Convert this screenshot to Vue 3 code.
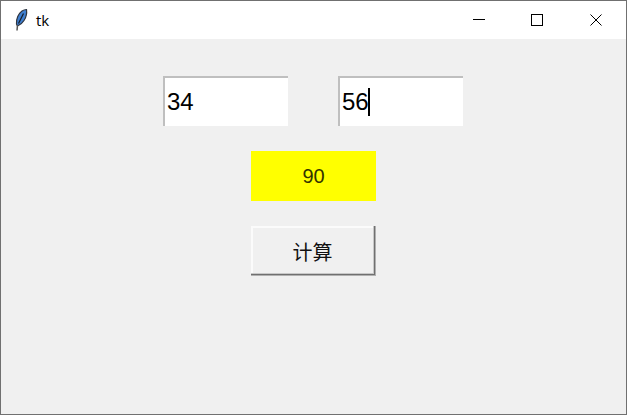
<template>
  <div class="window">
    <div class="titlebar">
      <svg class="feather" width="16" height="24" viewBox="0 0 16 24">
        <path d="M3.500 16 C3 11 5.500 5.500 9 3 C10.500 2 12 1.500 13.500 1.500 C14 5 13 9.500 11 12.500 C9.500 15 7 17 4.500 18 Z" fill="#3f7fd0" stroke="#2f3540" stroke-width="1.200" />
        <path d="M5.500 15.500 L10.500 5.500" stroke="#141c28" stroke-width="1.200" fill="none" />
        <path d="M4.500 17 L4 22.500" stroke="#555" stroke-width="1.500" fill="none" />
      </svg>
      <span class="title">tk</span>
      <div class="controls">
        <div class="ctrl">
          <svg width="12" height="12" viewBox="0 0 12 12"><path d="M0 5.500H12" stroke="#000" /></svg>
        </div>
        <div class="ctrl">
          <svg width="12" height="12" viewBox="0 0 12 12"><rect x="0.500" y="0.500" width="11" height="11" fill="none" stroke="#000" /></svg>
        </div>
        <div class="ctrl">
          <svg width="12" height="12" viewBox="0 0 12 12"><path d="M0.500 0.500L11.500 11.500M11.500 0.500L0.500 11.500" stroke="#000" /></svg>
        </div>
      </div>
    </div>
    <div class="content">
      <div class="inputs">
        <div class="entry">{{ a }}</div>
        <div class="entry">{{ b }}<span class="caret"></span></div>
      </div>
      <div class="result">{{ a + b }}</div>
      <button class="calc">计算</button>
    </div>
  </div>
</template>

<script setup>
import { ref } from 'vue';

const a = ref(34);
const b = ref(56);
</script>

<style>
html, body {
  margin: 0;
  background: #f0f0f0;
}
</style>

<style scoped>
.window {
  width: 627px;
  height: 415px;
  box-sizing: border-box;
  border: 1px solid #707070;
  background: #f0f0f0;
  display: flex;
  flex-direction: column;
  overflow: hidden;
}

.titlebar {
  height: 38px;
  background: #fff;
  display: flex;
  align-items: center;
  flex-shrink: 0;
}

.feather {
  margin-left: 12px;
}

.title {
  margin-left: 7px;
  font-family: "Open Sans", sans-serif;
  font-size: 15px;
  color: #000;
}

.controls {
  margin-left: auto;
  margin-right: 1px;
  display: flex;
}

.ctrl {
  width: 58px;
  height: 38px;
  display: flex;
  align-items: center;
  justify-content: center;
}

.ctrl:nth-child(2) {
  margin-right: 1px;
}

.content {
  padding-top: 37px;
  display: flex;
  flex-direction: column;
  align-items: center;
  gap: 25px;
}

.inputs {
  display: flex;
  gap: 50px;
  margin-left: -1px;
}

.entry {
  width: 125px;
  height: 50px;
  box-sizing: border-box;
  background: #fff;
  border-top: 2px solid #bfbfbf;
  border-left: 2px solid #bfbfbf;
  padding-left: 2px;
  font-family: "Liberation Sans", Arial, sans-serif;
  font-size: 24px;
  color: #000;
  display: flex;
  align-items: center;
}

.caret {
  width: 2px;
  height: 28px;
  margin-left: -1px;
  background: #000;
}

.result {
  width: 125px;
  height: 50px;
  background: #ffff00;
  color: #333300;
  font-family: "Liberation Sans", Arial, sans-serif;
  font-size: 20px;
  display: flex;
  align-items: center;
  justify-content: center;
}

.calc {
  width: 125px;
  height: 50px;
  box-sizing: border-box;
  padding: 0 2px 0 0;
  background: #f0f0f0;
  border: none;
  box-shadow: inset -1px -1px 0 #b0b0b0, inset -2px -2px 0 #707070, inset -3px -3px 0 #c8c8c8, inset 2px 2px 0 #fbfbfb;
  color: #111;
  font-family: "Noto Sans CJK SC", "Liberation Sans", sans-serif;
  font-size: 20px;
}
</style>
